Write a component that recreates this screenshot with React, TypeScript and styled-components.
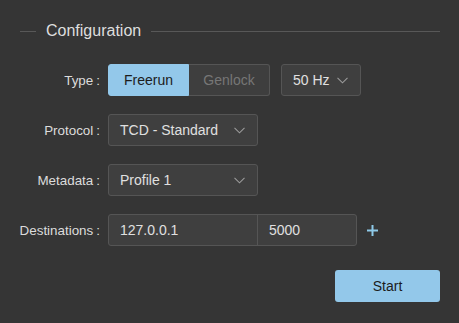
import React from "react";
import styled, { createGlobalStyle } from "styled-components";

const Global = createGlobalStyle`
  html, body { margin: 0; padding: 0; background: #353535; }
  body { font-family: "Liberation Sans", Arial, sans-serif; color: #dcdcdc; }
  * { box-sizing: border-box; }
`;

const Page = styled.div`
  width: 459px;
  height: 323px;
  padding: 21px 19px 0 20px;
  display: flex;
  flex-direction: column;
`;

const Legend = styled.div`
  display: flex;
  align-items: center;
  height: 20px;
  font-size: 16px;
  color: #dedede;
  &::before,
  &::after {
    content: "";
    height: 1px;
    background: #585858;
  }
  &::before { width: 16px; margin-right: 10px; }
  &::after { flex: 1; margin-left: 10px; }
`;

const Form = styled.div`
  display: grid;
  grid-template-columns: 80px auto;
  column-gap: 8px;
  row-gap: 18px;
  margin-top: 23px;
  align-items: center;
`;

const Label = styled.div`
  justify-self: end;
  font-size: 13.4px;
  color: #dcdcdc;
  white-space: nowrap;
  &::after { content: ":"; margin-left: 3px; }
`;

const Row = styled.div`
  display: flex;
  align-items: center;
  height: 32px;
`;

const Segmented = styled.div`
  display: flex;
  height: 32px;
  border-radius: 3px;
`;

const Segment = styled.button<{ $active?: boolean }>`
  width: 81px;
  height: 32px;
  font-family: inherit;
  font-size: 14px;
  padding: 0;
  border: 1px solid ${(p) => (p.$active ? "#93c8ea" : "#555555")};
  background: ${(p) => (p.$active ? "#93c8ea" : "#3e3e3e")};
  color: ${(p) => (p.$active ? "#1c1c1c" : "#767676")};
  &:first-child { border-radius: 3px 0 0 3px; }
  &:last-child { border-radius: 0 3px 3px 0; border-left: none; }
`;

const Select = styled.div<{ $w: number; $ml?: number }>`
  width: ${(p) => p.$w}px;
  margin-left: ${(p) => p.$ml ?? 0}px;
  height: 32px;
  display: flex;
  align-items: center;
  justify-content: space-between;
  padding: 0 12px 0 11px;
  background: #3f3f3f;
  border: 1px solid #555555;
  border-radius: 3px;
  font-size: 14px;
  color: #e0e0e0;
`;

const Chevron = () => (
  <svg width="11" height="7" viewBox="0 0 11 7" fill="none">
    <path d="M0.5 0.8 L5.5 5.8 L10.5 0.8" stroke="#9a9a9a" strokeWidth="1.1" />
  </svg>
);

const InputGroup = styled.div`
  display: flex;
  height: 32px;
  border: 1px solid #555555;
  border-radius: 3px;
  background: #3f3f3f;
`;

const Field = styled.div<{ $w: number }>`
  width: ${(p) => p.$w}px;
  height: 100%;
  display: flex;
  align-items: center;
  padding-left: 11px;
  font-size: 14px;
  color: #e0e0e0;
  & + & { border-left: 1px solid #555555; }
`;

const AddButton = styled.div`
  margin-left: 10px;
  width: 11px;
  height: 11px;
  display: flex;
`;

const Footer = styled.div`
  display: flex;
  justify-content: flex-end;
  margin-top: 24px;
`;

const StartButton = styled.button`
  width: 105px;
  height: 32px;
  border: none;
  border-radius: 3px;
  background: #93c8ea;
  color: #1c1c1c;
  font-family: inherit;
  font-size: 14px;
`;

export default function App() {
  return (
    <>
      <Global />
      <Page>
        <Legend>Configuration</Legend>
        <Form>
          <Label>Type</Label>
          <Row>
            <Segmented>
              <Segment $active>Freerun</Segment>
              <Segment>Genlock</Segment>
            </Segmented>
            <Select $w={80} $ml={11}>
              50 Hz <Chevron />
            </Select>
          </Row>
          <Label>Protocol</Label>
          <Row>
            <Select $w={150}>
              TCD - Standard <Chevron />
            </Select>
          </Row>
          <Label>Metadata</Label>
          <Row>
            <Select $w={150}>
              Profile 1 <Chevron />
            </Select>
          </Row>
          <Label>Destinations</Label>
          <Row>
            <InputGroup>
              <Field $w={148}>127.0.0.1</Field>
              <Field $w={99}>5000</Field>
            </InputGroup>
            <AddButton>
              <svg width="11" height="11" viewBox="0 0 11 11">
                <path d="M5.5 0 V11 M0 5.5 H11" stroke="#8ec9e8" strokeWidth="2" />
              </svg>
            </AddButton>
          </Row>
        </Form>
        <Footer>
          <StartButton>Start</StartButton>
        </Footer>
      </Page>
    </>
  );
}
